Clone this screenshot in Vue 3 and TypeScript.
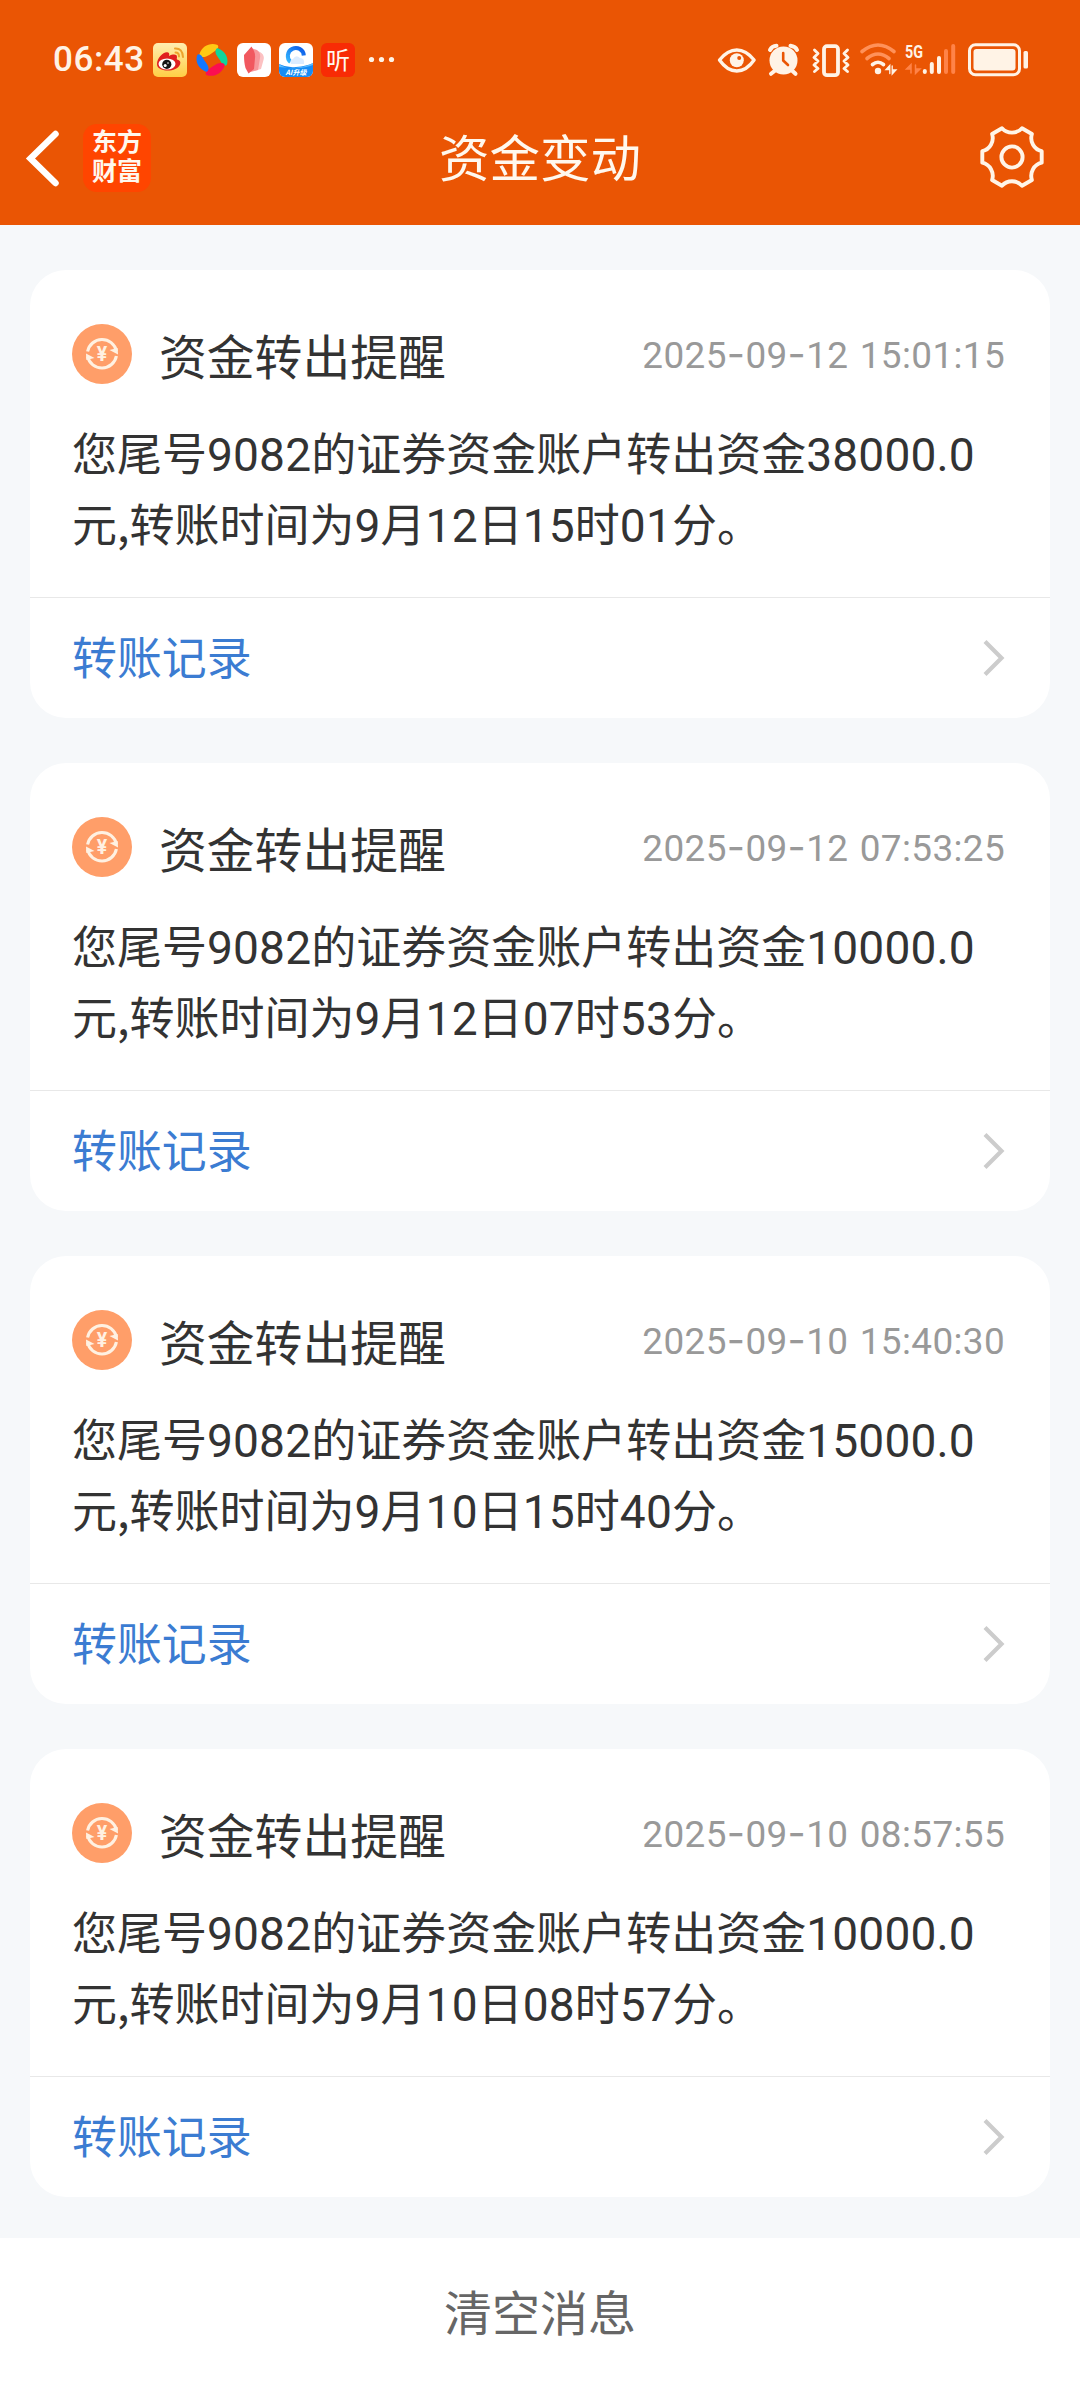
<script setup lang="ts">
interface Notice {
  title: string
  time: string
  body: string
}

interface Segment {
  kind: 'num' | 'dash' | 'cjk'
  text: string
}

const notices: Notice[] = [
  { title: '资金转出提醒', time: '2025-09-12 15:01:15', body: '您尾号9082的证券资金账户转出资金38000.0元,转账时间为9月12日15时01分。' },
  { title: '资金转出提醒', time: '2025-09-12 07:53:25', body: '您尾号9082的证券资金账户转出资金10000.0元,转账时间为9月12日07时53分。' },
  { title: '资金转出提醒', time: '2025-09-10 15:40:30', body: '您尾号9082的证券资金账户转出资金15000.0元,转账时间为9月10日15时40分。' },
  { title: '资金转出提醒', time: '2025-09-10 08:57:55', body: '您尾号9082的证券资金账户转出资金10000.0元,转账时间为9月10日08时57分。' },
]

// Figures, dashes and Chinese runs each get their own face and tracking.
function segments(text: string): Segment[] {
  const runs = text.match(/[\d.: ]+|-|[^\d.: -]+/g) ?? []
  return runs.map((run) => ({
    kind: run === '-' ? 'dash' : /^[\d.: ]/.test(run) ? 'num' : 'cjk',
    text: run,
  }))
}
</script>

<template>
  <div class="page">
    <header class="header">
      <div class="status">
        <span class="clock">06:43</span>
        <div class="apps">
          <svg width="34" height="34" viewBox="0 0 34 34">
            <defs>
              <linearGradient id="gold" x1="0" y1="0" x2="0" y2="1">
                <stop offset="0" stop-color="#ffeeb0" />
                <stop offset="1" stop-color="#ffcf45" />
              </linearGradient>
            </defs>
            <rect width="34" height="34" rx="5" fill="url(#gold)" />
            <path d="M4 21C4 15 11 8 15 9.500C17 10 16 13 16 13C20 11 24 11 24 14C24 15 23.500 16 24 16.500C27 17 28 19 27 21.500C25 26 19 28 13 27.500C8 27 4 25 4 21Z" fill="#e01f1f" />
            <ellipse cx="14" cy="21" rx="8.500" ry="5.600" fill="#fff" />
            <circle cx="13.800" cy="21.300" r="4.600" fill="#151515" />
            <circle cx="12.200" cy="22.500" r="1.500" fill="#fff" />
            <circle cx="15" cy="20" r=".8" fill="#fff" />
            <path d="M22 5.500Q29.500 5 30 14M22.500 9.500Q26 9.500 26 13.500" fill="none" stroke="#eda32c" stroke-width="2" stroke-linecap="round" />
          </svg>
          <svg class="swirl" width="32" height="34" viewBox="0 0 32 34">
            <path d="M3.500 11C6 3 14 -.5 21 1.800C23.500 3 22 6 19 8C15 10.500 11 14.500 6 14C3.500 13.500 3 12.500 3.500 11Z" fill="#ffc814" />
            <path d="M22.500 5.500C29 8 33 15 31 21.500C29.500 24 26.500 22 25 19C23 15 19 11.500 19.500 8C20 5.500 21 5 22.500 5.500Z" fill="#0fd69a" />
            <path d="M28.500 23C26 30.500 18 34.500 11 32.200C8.500 31 10 28 13 26C17 23.500 21 19.500 26 20C28.500 20.500 29 21.500 28.500 23Z" fill="#fb0f51" />
            <path d="M9.500 28.500C3 26 -1 19 1 12.500C2.500 10 5.500 12 7 15C9 19 13 22.500 12.500 26C12 28.500 11 29 9.500 28.500Z" fill="#1377ff" />
          </svg>
          <svg width="34" height="34" viewBox="0 0 34 34">
            <rect width="34" height="34" rx="6" fill="#fff" />
            <path d="M17 7L23 9Q28 12 26.500 17L24 26L14 29Z" fill="#fcc1c2" />
            <path d="M14 5L20 7Q24 10 23 15L21 27L12 29Z" fill="#f7979b" />
            <path d="M14.500 3.500L17 8Q18.500 11 18 15L17 26L11.500 30.500L8.500 25Q7 20 7 12Z" fill="#f1585f" />
          </svg>
          <svg width="34" height="34" viewBox="0 0 34 34">
            <defs>
              <clipPath id="tile"><rect width="34" height="34" rx="6" /></clipPath>
              <linearGradient id="ring" x1="0" y1="1" x2="1" y2="0">
                <stop offset="0" stop-color="#35b8ff" />
                <stop offset="1" stop-color="#0b58e8" />
              </linearGradient>
            </defs>
            <g clip-path="url(#tile)">
              <rect width="34" height="34" fill="#fff" />
              <path d="M11.500 19A8 8 0 1 1 24.800 12.500" fill="none" stroke="url(#ring)" stroke-width="4" />
              <path d="M12 21Q10 17 14 16Q17 11 21 15Q26 15 25 21Z" fill="#dcecff" />
              <path d="M0 21Q8 25 17 24Q28 23 34 20V34H0Z" fill="#168cf5" />
              <path d="M0 21Q6 26 16 25Q27 24 34 20V22Q23 27 0 24Z" fill="#5cbdff" />
              <text x="17" y="32" text-anchor="middle" font-size="7" font-weight="700" font-style="italic" fill="#fff">AI升级</text>
            </g>
          </svg>
          <span class="listen">听</span>
          <svg width="28" height="34" viewBox="368 43 28 34" fill="#fff3e6">
            <circle cx="371.500" cy="59.500" r="2.600" />
            <circle cx="381.500" cy="59.500" r="2.600" />
            <circle cx="391.500" cy="59.500" r="2.600" />
          </svg>
        </div>
        <div class="indicators">
          <svg width="40" height="34" viewBox="717.500 43 40 34">
            <path d="M720 60Q728 50 737.300 50T754.600 60Q747 71 737.300 71T720 60Z" fill="none" stroke="#fff3e6" stroke-width="3.400" stroke-linejoin="round" />
            <circle cx="737.300" cy="60.300" r="7" fill="#fff3e6" />
            <circle cx="739.700" cy="58" r="2" fill="#ea5504" />
          </svg>
          <svg width="34" height="34" viewBox="767.500 43 34 34">
            <circle cx="784" cy="60.500" r="14" fill="#fff3e6" />
            <path d="M770.500 50Q772.500 46 777 45.800M791 45.800Q796 46.500 797.500 50" fill="none" stroke="#fff3e6" stroke-width="4" stroke-linecap="round" />
            <path d="M775 71L771.500 73.800M793 71L796 73.800" stroke="#fff3e6" stroke-width="4" stroke-linecap="round" />
            <path d="M783.700 53V60.500L788.500 65" fill="none" stroke="#ea5504" stroke-width="2.600" stroke-linecap="round" stroke-linejoin="round" />
          </svg>
          <svg width="40" height="34" viewBox="811 43 40 34" fill="none" stroke="#fff3e6" stroke-linejoin="round" stroke-linecap="round">
            <rect x="824" y="46.200" width="14" height="29" rx="3" stroke-width="3.800" />
            <path d="M814.500 50L818 53.500L814 57.500L818 61L814 65L818 68.500L814.500 71.500M847.500 50L844 53.500L848 57.500L844 61L848 65L844 68.500L847.500 71.500" stroke-width="2.900" />
          </svg>
          <svg width="36" height="34" viewBox="861 43 36 34" fill="none" stroke-linecap="round">
            <path d="M862 51.500Q878 38.500 894 51.500" stroke="#ff9159" stroke-width="3.600" />
            <path d="M867 58.500Q878 49.500 889 58.500" stroke="#ff9159" stroke-width="3.600" />
            <path d="M872.500 64.500Q878 60 883.500 64.500" stroke="#fff3e6" stroke-width="3.600" />
            <circle cx="878" cy="71" r="3.200" fill="#fff3e6" />
            <path d="M886 69.500H889.800V65.500ZM889.800 66V73.500M892.200 66V73.500M892.200 74V70H896Z" fill="#fff3e6" stroke="#fff3e6" stroke-width="1.300" />
          </svg>
          <svg width="50" height="34" viewBox="907 43 50 34" stroke-linecap="round">
            <text x="905" y="57.500" font-size="19" font-weight="700" textLength="18" lengthAdjust="spacingAndGlyphs" class="net">5G</text>
            <path d="M906.500 69H911V64.500ZM911 65V73M915.500 65V73M915.500 73.500V69H920Z" fill="#ff8348" stroke="#ff8348" stroke-width="1.500" />
            <path d="M924.800 71V72M931.800 64V72M939 58V72" stroke="#fff3e6" stroke-width="4" />
            <path d="M946 51V72M953.200 46V72" stroke="#ff8348" stroke-width="4" />
          </svg>
          <svg width="62" height="34" viewBox="967 43 62 34">
            <rect x="969.500" y="44.800" width="50" height="30" rx="6" fill="none" stroke="#fff3e6" stroke-width="3" />
            <rect x="973.500" y="49" width="42" height="21.500" rx="3" fill="#fff3e6" />
            <rect x="1023.500" y="51" width="4.500" height="17.500" rx="1.500" fill="#fff3e6" />
          </svg>
        </div>
      </div>
      <nav class="nav">
        <div class="nav-left">
          <svg width="33" height="56" viewBox="26 129 33 56">
            <path d="M55.500 133L30.500 157.500L55.500 182" fill="none" stroke="#fff" stroke-width="6.500" stroke-linecap="round" stroke-linejoin="miter" />
          </svg>
          <div class="logo">东方财富</div>
        </div>
        <h1 class="nav-title">资金变动</h1>
        <svg class="gear" width="64" height="64" viewBox="980.300 124.300 64 64" fill="none" stroke="#fff5e8" stroke-width="3.900" stroke-linejoin="round">
          <path d="M1002.300 127.500A13.500 13.500 0 0 0 1022.300 127.500L1032.200 133.300A13.500 13.500 0 0 0 1042 150.500V162A13.500 13.500 0 0 0 1032.200 179.300L1022.300 185A13.500 13.500 0 0 0 1002.300 185L992.400 179.300A13.500 13.500 0 0 0 982.600 162V150.500A13.500 13.500 0 0 0 992.400 133.300Z" />
          <circle cx="1012.300" cy="156.300" r="10.600" />
        </svg>
      </nav>
    </header>

    <main class="list">
      <article v-for="(n, i) in notices" :key="i" class="card">
        <div class="card-main">
          <div class="card-head">
            <svg class="coin" width="60" height="60" viewBox="0 0 60 60">
              <circle cx="30" cy="30" r="30" fill="#ff9e69" />
              <g fill="none" stroke="#fff1e2" stroke-width="3.100">
                <path d="M15.600 27.500A14.700 14.700 0 0 1 44.400 27" />
                <path d="M15.600 32.500A14.700 14.700 0 0 0 44.400 32" />
              </g>
              <path d="M46 30.500L37.500 26L45.700 24ZM14 29.500L22.500 34L14.300 36Z" fill="#fff1e2" />
              <text x="30" y="36.800" text-anchor="middle" font-size="19.500" font-weight="700" fill="#fff1e2" class="yen">¥</text>
            </svg>
            <h2 class="card-title">{{ n.title }}</h2>
            <time class="card-time"><span v-for="(s, k) in segments(n.time)" :key="k" :class="s.kind">{{ s.text }}</span></time>
          </div>
          <p class="card-body"><span v-for="(s, k) in segments(n.body)" :key="k" :class="s.kind">{{ s.text }}</span></p>
        </div>
        <div class="card-link">
          <span class="link-text">转账记录</span>
          <svg width="22" height="38" viewBox="0 0 22 38">
            <path d="M2 2.500L18.500 19L2 35.500" fill="none" stroke="#ccc" stroke-width="4.200" />
          </svg>
        </div>
      </article>
    </main>

    <footer class="footer">清空消息</footer>
  </div>
</template>

<style>
body {
  margin: 0;
  background: #f6f8fa;
}
</style>

<style scoped>
.page {
  display: flex;
  flex-direction: column;
  width: 1080px;
  height: 2388px;
  overflow: hidden;
  background: #f6f8fa;
  color: #333;
  font-family: 'Noto Sans CJK SC', sans-serif;
}
svg {
  display: block;
  flex: none;
  overflow: visible;
}
.header {
  flex: none;
  box-sizing: border-box;
  height: 225px;
  padding-top: 43px;
  background: #ea5504;
  color: #fff8ee;
}
.status {
  display: flex;
  align-items: center;
  height: 34px;
  padding: 0 51px 0 53px;
}
.clock {
  width: 100px;
  font: 500 35px/34px Roboto, sans-serif;
  letter-spacing: 0.6px;
  color: #fff3e6;
  white-space: nowrap;
}
.apps {
  display: flex;
  gap: 8px;
}
.swirl {
  margin: 0 1px;
}
.listen {
  width: 34px;
  height: 34px;
  margin-right: 5px;
  border-radius: 6px;
  background: #f82b05;
  font-size: 24px;
  line-height: 32px;
  text-align: center;
}
.indicators {
  display: flex;
  gap: 10px;
  margin-left: auto;
}
.net {
  fill: #fff3e6;
  font-family: Roboto, sans-serif;
}
.yen {
  font-family: Roboto, sans-serif;
}
.nav {
  display: grid;
  grid-template-columns: 1fr auto 1fr;
  align-items: center;
  height: 66px;
  margin-top: 47px;
  padding: 0 35.700px;
}
.nav-left {
  display: flex;
  align-items: center;
  gap: 24px;
  margin-left: -9.700px;
}
.logo {
  box-sizing: border-box;
  width: 68px;
  height: 68px;
  padding: 2px 9px 0;
  border-radius: 14px;
  background: #ff4500;
  font-size: 25px;
  font-weight: 700;
  line-height: 29px;
}
.nav-title {
  margin: -6px 0 0;
  font-size: 50.500px;
  font-weight: 400;
  line-height: 66px;
}
.gear {
  justify-self: end;
  margin-bottom: 2px;
}
.list {
  display: flex;
  flex: none;
  flex-direction: column;
  gap: 45px;
  height: 1927px;
  padding: 45px 30px 41px;
}
.card {
  display: flex;
  flex: none;
  flex-direction: column;
  height: 448px;
  border-radius: 36px;
  background: #fff;
}
.card-main {
  box-sizing: border-box;
  height: 327px;
  padding: 54px 45px 0 42px;
}
.card-head {
  display: flex;
  align-items: center;
  height: 60px;
}
.card-title {
  margin: 1px 0 0 27px;
  font-size: 47.800px;
  font-weight: 400;
  line-height: 60px;
}
.card-time {
  display: block;
  margin: -4px 0 0 auto;
  color: #999;
  font-size: 36px;
  line-height: 60px;
  white-space: nowrap;
}
.card-body {
  margin: 32px 0 0;
  font-size: 45px;
  line-height: 71px;
}
.num,
.dash,
.cjk {
  line-height: 0;
}
.num {
  font-family: Roboto, sans-serif;
  font-size: 1.025em;
  letter-spacing: 0.003em;
}
.card-time .num {
  letter-spacing: 0.01em;
  word-spacing: 0.05em;
}
.dash {
  font-family: Inter, sans-serif;
  font-size: 1.1em;
  letter-spacing: 0.01em;
}
.card-link {
  display: flex;
  align-items: center;
  justify-content: space-between;
  box-sizing: border-box;
  height: 121px;
  padding: 0 45px 0 42px;
  border-top: 1px solid #e8e8e8;
  color: #3b7cd2;
  font-size: 44.900px;
  line-height: 60px;
}
.link-text {
  margin-bottom: 5px;
}
.footer {
  flex: 1;
  background: #fff;
  color: #666;
  font-size: 48px;
  line-height: 144px;
  text-align: center;
}
</style>
